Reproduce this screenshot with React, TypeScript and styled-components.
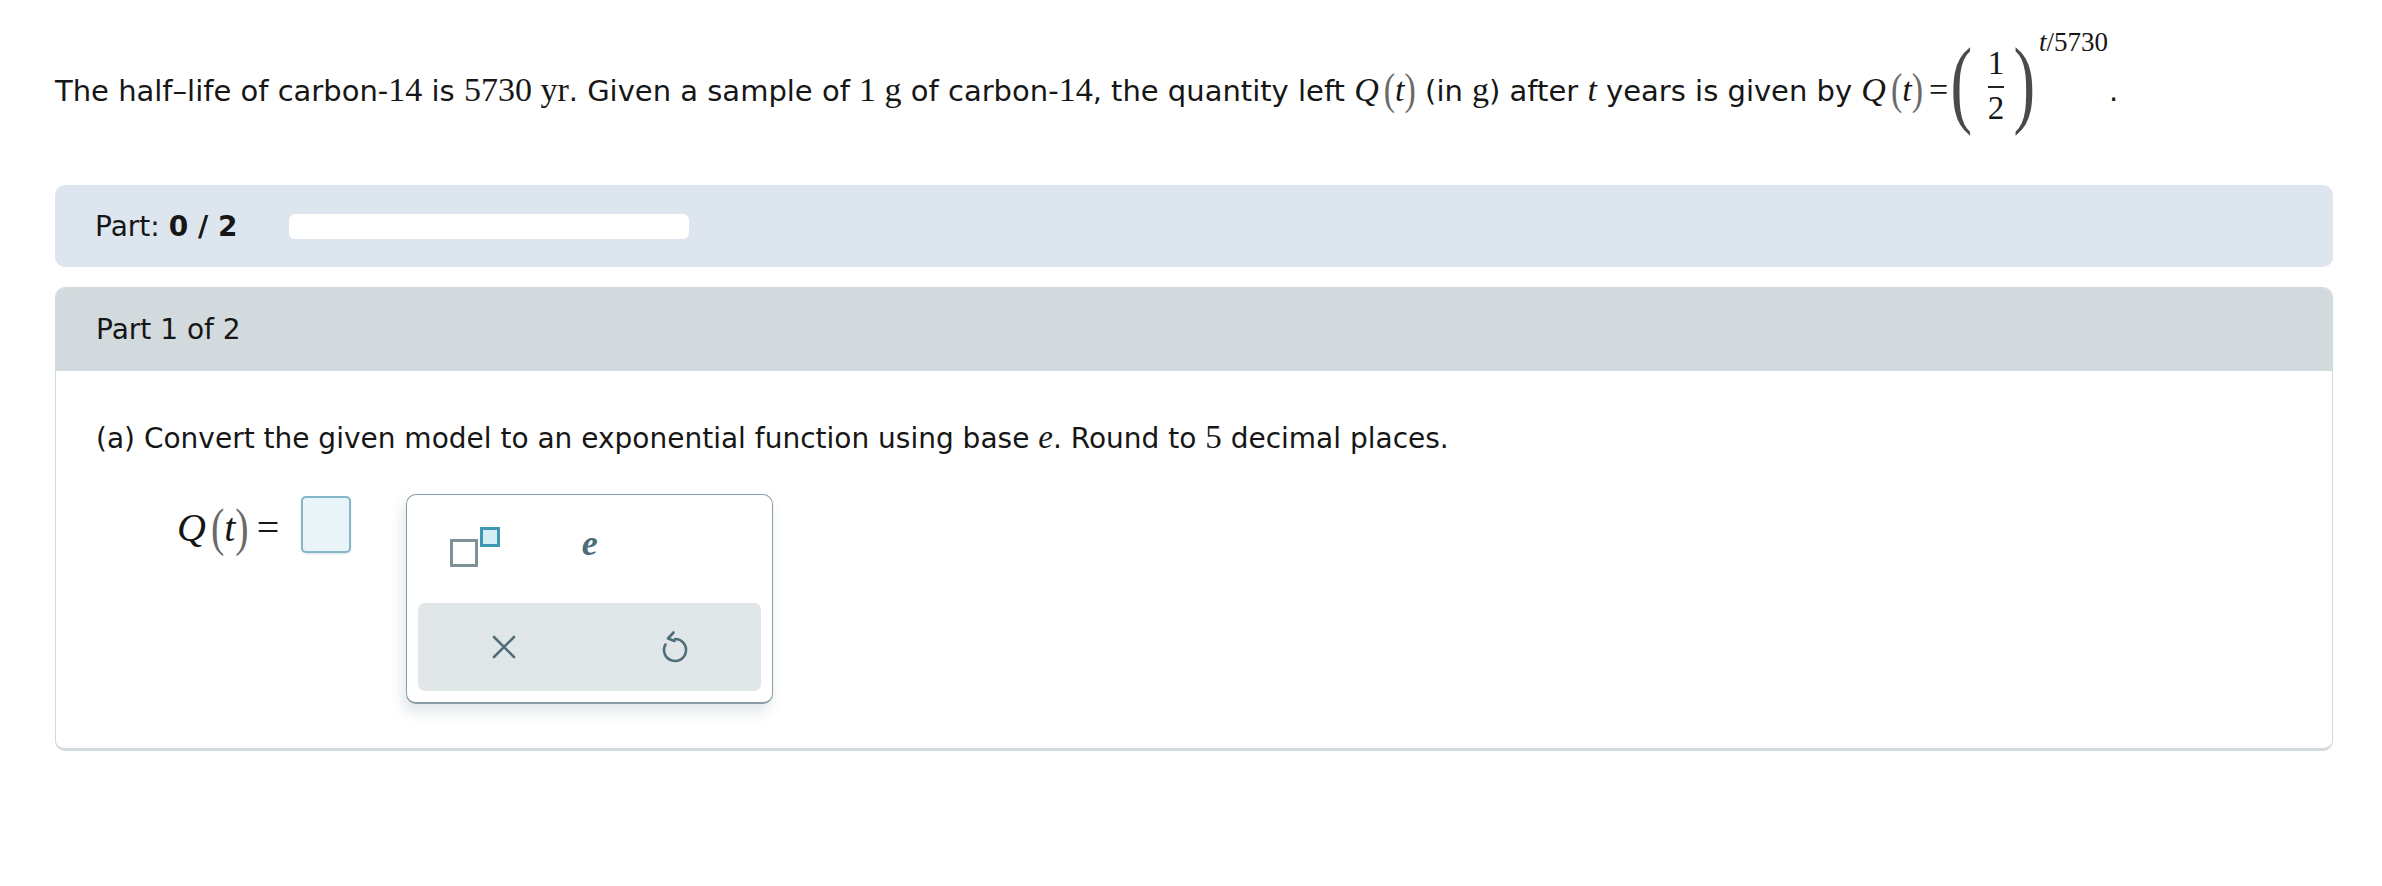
import React from "react";
import styled, { createGlobalStyle } from "styled-components";

const GlobalStyle = createGlobalStyle`
  html, body { margin: 0; padding: 0; background: #ffffff; }
  body {
    font-family: "DejaVu Sans", Verdana, sans-serif;
    font-size: 28px;
    color: #161616;
  }
`;

const Page = styled.div`
  padding: 0 49px 0 55px;
`;

const Problem = styled.p`
  margin: 0;
  padding-top: 26px;
  height: 185px;
  box-sizing: border-box;
  font-size: 29px;
  line-height: 1.2;
  white-space: nowrap;
`;

const Num = styled.span<{ $size?: number }>`
  font-family: "Liberation Serif", "Times New Roman", serif;
  font-size: ${(p) => p.$size ?? 34}px;
`;

const Var = styled(Num)`
  font-style: italic;
`;

const Paren = styled.span<{ $gap?: number; $size?: number }>`
  display: inline-block;
  font-family: "Liberation Serif", "Times New Roman", serif;
  font-size: ${(p) => p.$size ?? 34}px;
  color: #6a6a6a;
  transform: scaleY(1.3);
  margin-left: ${(p) => p.$gap ?? 0}px;
`;

const Eq = styled(Num)<{ $before?: number; $after?: number }>`
  margin: 0 ${(p) => p.$after ?? 0}px 0 ${(p) => p.$before ?? 3}px;
`;

const BigParen = styled.span`
  display: inline-block;
  font-family: "Liberation Serif", "Times New Roman", serif;
  font-size: 50px;
  color: #4a4a4a;
  transform: scale(1.3, 1.95);
  vertical-align: 2px;
`;

const Frac = styled.span`
  display: inline-flex;
  flex-direction: column;
  align-items: center;
  vertical-align: 27px;
  font-family: "Liberation Serif", "Times New Roman", serif;
  font-size: 33px;
  line-height: 1;
  margin: 0 12px 0 18px;
`;

const FracBar = styled.span`
  align-self: stretch;
  height: 2px;
  background: #222;
  margin: 6px 0 4px;
`;

const Sup = styled.span`
  font-family: "Liberation Serif", "Times New Roman", serif;
  font-size: 27px;
  vertical-align: 50px;
  margin-left: 6px;
`;

const SupVar = styled.i`
  font-style: italic;
`;

const Dot = styled.span`
  margin-left: 1px;
`;

const PartBar = styled.div`
  height: 82px;
  display: flex;
  align-items: center;
  padding: 0 40px;
  background: #dde6ee;
  border-radius: 10px;
`;

const Bold = styled.b`
  font-weight: bold;
  margin-left: 9px;
`;

const Progress = styled.div`
  width: 400px;
  height: 25px;
  background: #ffffff;
  border-radius: 6px;
  margin-left: 52px;
`;

const Card = styled.section`
  margin-top: 20px;
  border: 1px solid #d3dadd;
  border-bottom-width: 3px;
  border-radius: 10px;
  overflow: hidden;
`;

const CardHeader = styled.div`
  height: 83px;
  background: #d3dadd;
  display: flex;
  align-items: center;
  padding: 0 40px;
`;

const CardBody = styled.div`
  padding: 49px 40px 44px;
`;

const Instruction = styled.p`
  margin: 0;
  line-height: 34px;
`;

const AnswerRow = styled.div`
  display: flex;
  align-items: flex-start;
  margin-top: 38px;
  padding-left: 81px;
`;

const MathLabel = styled.span`
  display: inline-flex;
  align-items: center;
  height: 66px;
  white-space: nowrap;
`;

const AnswerBox = styled.div`
  width: 50px;
  height: 57px;
  box-sizing: border-box;
  margin: 2px 0 0 16px;
  border: 2px solid #86b7c6;
  border-radius: 5px;
  background: #e8f4f8;
  box-shadow: 0 1px 2px rgba(60, 110, 130, 0.2);
`;

const Keypad = styled.div`
  width: 367px;
  box-sizing: border-box;
  margin-left: 55px;
  padding: 11px;
  border: 1px solid #8a9da6;
  border-bottom-width: 2px;
  border-radius: 10px;
  background: #ffffff;
  box-shadow: -3px 8px 14px rgba(70, 100, 120, 0.16);
  display: flex;
  flex-direction: column;
  gap: 15px;
`;

const TopKeys = styled.div`
  height: 82px;
  display: grid;
  grid-template-columns: repeat(3, 1fr);
  align-items: center;
  justify-items: center;
`;

const BottomKeys = styled.div`
  height: 88px;
  display: grid;
  grid-template-columns: repeat(2, 1fr);
  align-items: center;
  justify-items: center;
  background: #e1e6e9;
  border-radius: 7px;
`;

const SuperIcon = styled.span`
  display: inline-flex;
  height: 40px;
  gap: 2px;
`;

const Square = styled.span<{ $size: number; $accent?: boolean }>`
  width: ${(p) => p.$size}px;
  height: ${(p) => p.$size}px;
  box-sizing: border-box;
  border: 3px solid ${(p) => (p.$accent ? "#3f98b1" : "#7d9199")};
  background: ${(p) => (p.$accent ? "#d5eef4" : "#ffffff")};
  align-self: ${(p) => (p.$accent ? "flex-start" : "flex-end")};
`;

const EKey = styled.span`
  font-family: "Liberation Serif", "Times New Roman", serif;
  font-style: italic;
  font-weight: bold;
  font-size: 36px;
  color: #4b6c79;
  line-height: 1;
  margin-bottom: 8px;
`;

const IconSvg = styled.svg`
  display: block;
  stroke: #4e6e79;
  fill: none;
  stroke-width: 2.6;
  stroke-linecap: round;
  stroke-linejoin: round;
`;

const QT: React.FC<{ size?: number }> = ({ size }) => (
  <>
    <Var $size={size}>Q</Var>
    <Paren $gap={5} $size={size}>(</Paren>
    <Var $size={size}>t</Var>
    <Paren $size={size}>)</Paren>
  </>
);

export default function App() {
  return (
    <>
      <GlobalStyle />
      <Page>
        <Problem>
          The half–life of carbon-<Num>14</Num> is <Num>5730 yr</Num>. Given a sample of{" "}
          <Num>1 g</Num> of carbon-<Num>14</Num>, the quantity left <QT /> (in <Num>g</Num>)
          after <Var>t</Var> years is given by <QT />
          <Eq $before={6} $after={5}>=</Eq>
          <BigParen>(</BigParen>
          <Frac>
            <span>1</span>
            <FracBar />
            <span>2</span>
          </Frac>
          <BigParen>)</BigParen>
          <Sup>
            <SupVar>t</SupVar>/5730
          </Sup>
          <Dot>.</Dot>
        </Problem>

        <PartBar>
          Part:<Bold>0 / 2</Bold>
          <Progress />
        </PartBar>

        <Card>
          <CardHeader>Part 1 of 2</CardHeader>
          <CardBody>
            <Instruction>
              (a) Convert the given model to an exponential function using base <Var $size={33}>e</Var>. Round to{" "}
              <Num $size={33}>5</Num> decimal places.
            </Instruction>
            <AnswerRow>
              <MathLabel>
                <QT size={40} />
                <Eq $size={40} $before={8} $after={6}>=</Eq>
              </MathLabel>
              <AnswerBox />
              <Keypad>
                <TopKeys>
                  <SuperIcon>
                    <Square $size={28} />
                    <Square $size={20} $accent />
                  </SuperIcon>
                  <EKey>e</EKey>
                  <span />
                </TopKeys>
                <BottomKeys>
                  <IconSvg width="26" height="26" viewBox="0 0 26 26">
                    <path d="M3 3 L23 23 M23 3 L3 23" />
                  </IconSvg>
                  <IconSvg width="28" height="34" viewBox="0 0 28 34">
                    <path d="M14 9 A11 11 0 1 1 4.5 14.5" />
                    <path d="M12.5 2.5 L7 8.5 L13.5 11" />
                  </IconSvg>
                </BottomKeys>
              </Keypad>
            </AnswerRow>
          </CardBody>
        </Card>
      </Page>
    </>
  );
}
